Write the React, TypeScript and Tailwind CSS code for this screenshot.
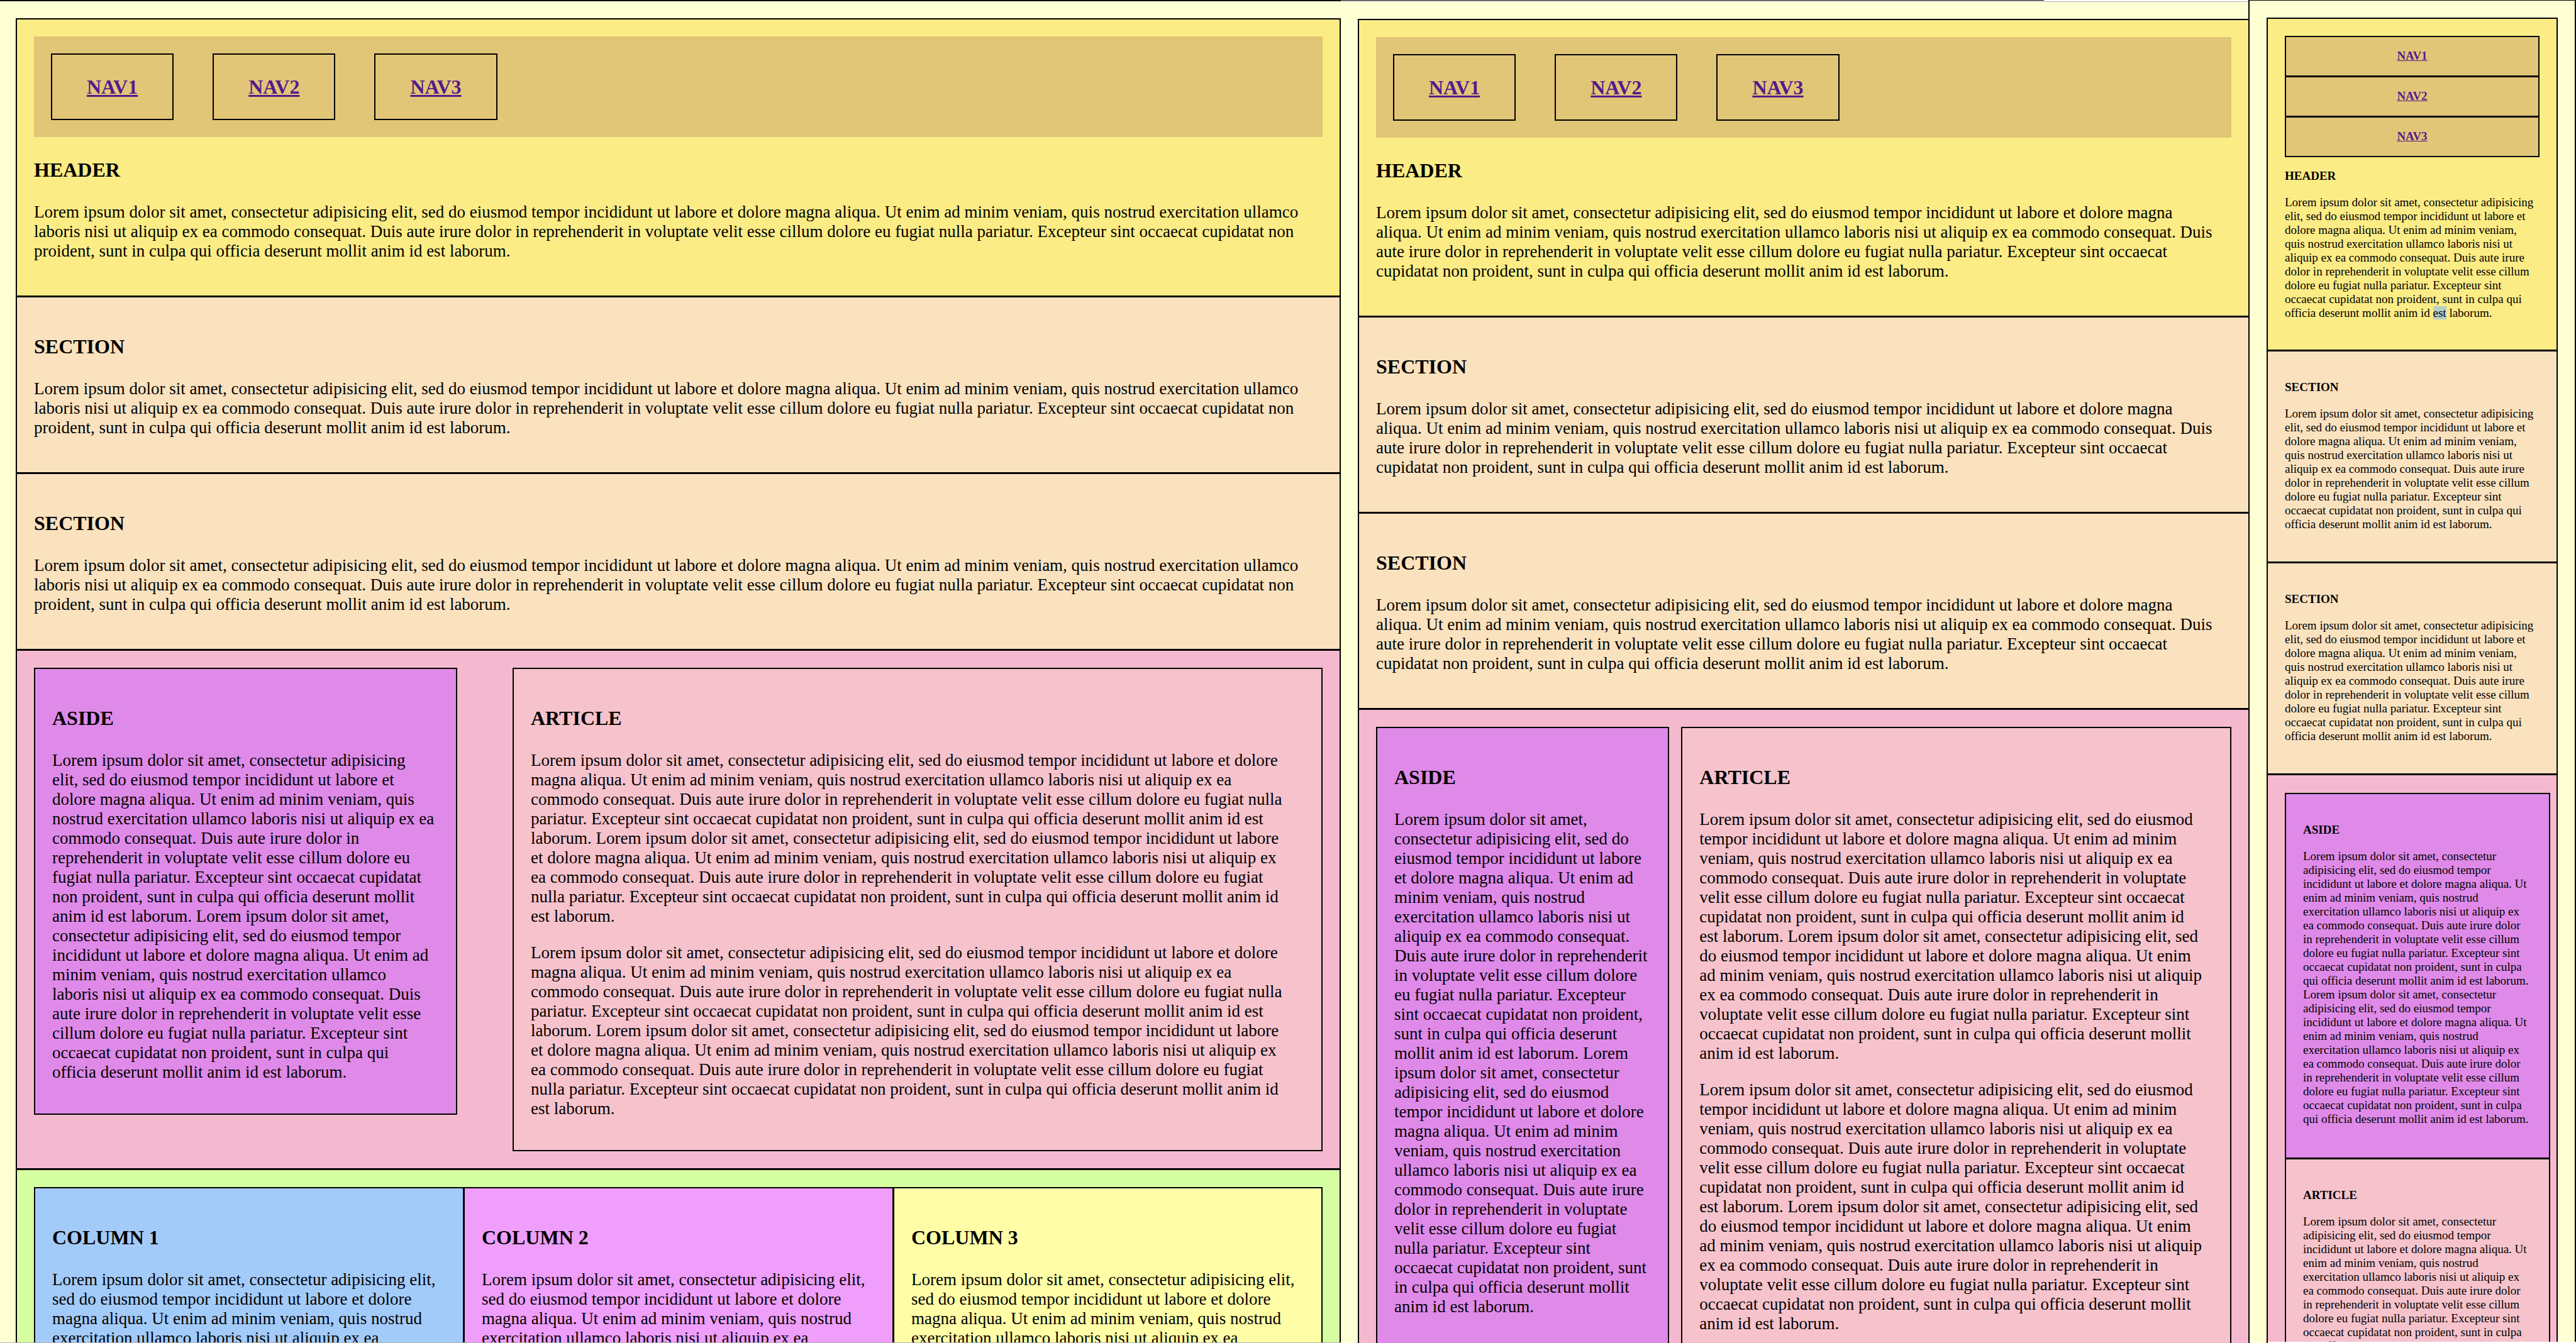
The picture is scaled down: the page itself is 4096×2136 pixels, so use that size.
import type { ReactNode } from "react";

const LOREM_START =
  "Lorem ipsum dolor sit amet, consectetur adipisicing elit, sed do eiusmod tempor incididunt ut labore et dolore magna aliqua. Ut enim ad minim veniam, quis nostrud exercitation ullamco laboris nisi ut aliquip ex ea commodo consequat. Duis aute irure dolor in reprehenderit in voluptate velit esse cillum dolore eu fugiat nulla pariatur. Excepteur sint occaecat cupidatat non proident, sunt in culpa qui officia deserunt mollit anim id ";
const LOREM = `${LOREM_START}est laborum.`;
const LOREM_TWICE = `${LOREM} ${LOREM}`;
const NAV = ["NAV1", "NAV2", "NAV3"];

/* Wide layouts */

function Heading({ children }: { children: ReactNode }) {
  return <h3 className="mb-[33px] text-[32px] leading-[37px] font-bold">{children}</h3>;
}

function WideHeader() {
  return (
    <header className="bg-[#fcec85] px-[27px] pt-[27px] pb-[55px]">
      <nav className="mb-[34px] flex gap-[62px] bg-[#e1c677] p-[27px]">
        {NAV.map((name) => (
          <a
            key={name}
            href="#"
            className="flex h-[106px] items-center border-2 border-black px-[55px] text-[32px] leading-[37px] font-bold text-[#551a8b] underline"
          >
            {name}
          </a>
        ))}
      </nav>
      <Heading>HEADER</Heading>
      <p className="pr-[22px]">{LOREM}</p>
    </header>
  );
}

function WideSection() {
  return (
    <section className="bg-[#fae2bf] px-[27px] pt-[60px] pb-[55px]">
      <Heading>SECTION</Heading>
      <p className="pr-[22px]">{LOREM}</p>
    </section>
  );
}

function WideAside({ className }: { className: string }) {
  return (
    <aside className={`${className} border-2 border-black bg-[#df8ae9] pt-[60px] pb-[50px] pl-[27px]`}>
      <Heading>ASIDE</Heading>
      <p>{LOREM_TWICE}</p>
    </aside>
  );
}

function WideArticle({ className }: { className: string }) {
  return (
    <article className={`${className} border-2 border-black bg-[#f6c3cc] pt-[60px] pb-[50px] pl-[27px]`}>
      <Heading>ARTICLE</Heading>
      <p className="mb-[27px]">{LOREM_TWICE}</p>
      <p>{LOREM_TWICE}</p>
    </article>
  );
}

function Column({ title, className }: { title: string; className: string }) {
  return (
    <section className={`${className} px-[27px] pt-[60px] pb-[50px]`}>
      <Heading>{title}</Heading>
      <p>{LOREM}</p>
    </section>
  );
}

function DesktopPage() {
  return (
    <div className="h-full overflow-hidden border-t-2 border-b border-t-black border-b-[#b4b4b4] pt-[27px] pl-[25px] text-[27px] leading-[31px]">
      <div className="divide-y-3 divide-black border-2 border-black">
        <WideHeader />
        <WideSection />
        <WideSection />
        <div className="grid grid-cols-[673fr_1288fr] items-start gap-[88px] bg-[#f5b9cf] p-[27px]">
          <WideAside className="pr-[33px]" />
          <WideArticle className="pr-[47px]" />
        </div>
        <div className="bg-[#d6ffa2] p-[27px]">
          <div className="grid grid-cols-[683fr_683fr_679fr] divide-x-3 divide-black border-2 border-black">
            <Column title="COLUMN 1" className="bg-[#a3cbfa]" />
            <Column title="COLUMN 2" className="bg-[#ef9efb]" />
            <Column title="COLUMN 3" className="bg-[#fffea6]" />
          </div>
        </div>
      </div>
    </div>
  );
}

function TabletPage() {
  return (
    <div className="h-full overflow-hidden text-[27px] leading-[31px]">
      <div className="flex h-px">
        <div className="flex-[1118] bg-black" />
        <div className="flex-[325] bg-white" />
      </div>
      <div className="mb-[27px] h-[2px] border-b border-[#b4b4b4] bg-white" />
      <div className="ml-[27px] divide-y-3 divide-black border-2 border-r-0 border-black">
        <WideHeader />
        <WideSection />
        <WideSection />
        <div className="grid grid-cols-[466fr_874fr] items-start gap-[19px] bg-[#f5b9cf] p-[27px]">
          <WideAside className="pr-[27px]" />
          <WideArticle className="pr-[43px]" />
        </div>
      </div>
    </div>
  );
}

/* Narrow layout */

function SmallHeading({ children }: { children: ReactNode }) {
  return <h3 className="mb-[20px] font-bold">{children}</h3>;
}

function PhonePage() {
  return (
    <div className="h-full overflow-hidden border-2 border-t border-b-0 border-black px-[27px] pt-[27px] text-[19px] leading-[22px]">
      <div className="divide-y-3 divide-black border-2 border-black">
        <header className="bg-[#fcec85] px-[27px] pt-[27px] pb-[47px]">
          <nav className="mb-[19px] divide-y-3 divide-black border-2 border-black bg-[#e1c677] text-center">
            {NAV.map((name) => (
              <div key={name} className="pt-[19px] pb-[20px]">
                <a href="#" className="font-bold text-[#551a8b] underline">
                  {name}
                </a>
              </div>
            ))}
          </nav>
          <SmallHeading>HEADER</SmallHeading>
          <p>
            {LOREM_START}
            <mark className="bg-[#b5cfcb] text-black">est</mark> laborum.
          </p>
        </header>
        {[0, 1].map((i) => (
          <section key={i} className="bg-[#fae2bf] px-[27px] pt-[46px] pb-[48px]">
            <SmallHeading>SECTION</SmallHeading>
            <p>{LOREM}</p>
          </section>
        ))}
        <div className="bg-[#f5b9cf] pt-[28px] pr-[10px] pb-[27px] pl-[27px]">
          <div className="divide-y-3 divide-black border-2 border-black">
            <aside className="bg-[#df8ae9] px-[27px] pt-[46px] pb-[50px]">
              <SmallHeading>ASIDE</SmallHeading>
              <p>{LOREM_TWICE}</p>
            </aside>
            <article className="bg-[#f6c3cc] px-[27px] pt-[46px] pb-[50px]">
              <SmallHeading>ARTICLE</SmallHeading>
              <p>{LOREM_TWICE}</p>
            </article>
          </div>
        </div>
      </div>
    </div>
  );
}

export default function App() {
  return (
    <main className="relative grid h-screen grid-cols-[2132fr_1443fr_521fr] overflow-hidden bg-[#ffffd4] font-['Liberation_Serif',serif] text-black">
      <DesktopPage />
      <TabletPage />
      <PhonePage />
      <div className="absolute right-0 bottom-0 h-[2px] w-[490px] bg-white" />
    </main>
  );
}
